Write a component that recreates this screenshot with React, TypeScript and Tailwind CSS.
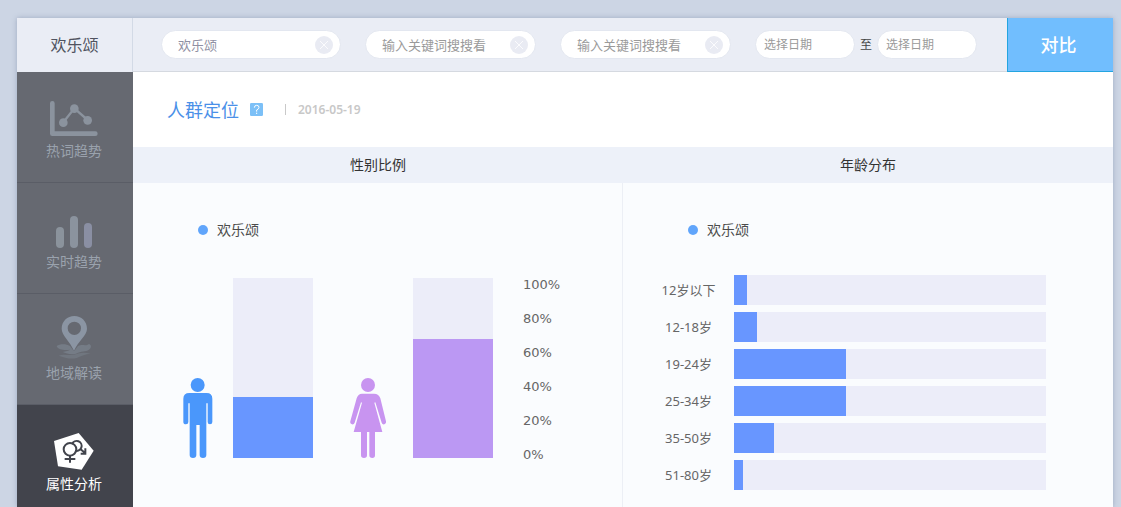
import type { ReactNode } from "react";

const navItems: { label: string; icon: ReactNode; active?: boolean }[] = [
  {
    label: "热词趋势",
    icon: (
      <svg width="48" height="36" viewBox="0 0 144 108" fill="none" stroke="#8b939e" aria-hidden="true">
        <path d="M7 7V98H136" strokeWidth="14" strokeLinecap="round" strokeLinejoin="round" />
        <path d="M40 64L73 22L113 57" strokeWidth="7" />
        <g fill="#8b939e" stroke="none">
          <circle cx="40" cy="65" r="13" />
          <circle cx="73" cy="23" r="13" />
          <circle cx="113" cy="58" r="13" />
        </g>
      </svg>
    ),
  },
  {
    label: "实时趋势",
    icon: (
      <svg width="36" height="32" viewBox="0 0 108 96" aria-hidden="true">
        <rect x="0" y="33" width="24" height="63" rx="12" fill="#8b939c" />
        <rect x="42" y="0" width="24" height="96" rx="12" fill="#8b939e" />
        <rect x="84" y="21" width="24" height="75" rx="12" fill="#8a8fa3" />
      </svg>
    ),
  },
  {
    label: "地域解读",
    icon: (
      <svg width="36" height="43" viewBox="0 0 108 129" aria-hidden="true">
        <path
          d="M2 90C12 83 30 83 42 90L54 106L66 90C78 84 86 90 95 86C104 82 108 92 102 98C94 108 80 104 66 110C52 118 34 114 20 108C30 106 38 104 42 101C28 104 6 102 2 90Z"
          fill="#757c86"
        />
        <path
          d="M8 119C24 113 38 120 54 116C72 110 84 108 104 113C88 114 76 120 62 126C44 131 26 125 8 119Z"
          fill="#70767f"
        />
        <path
          fillRule="evenodd"
          d="M55 0C34 0 17 16 17 38C17 58 42 76 54 104C66 76 93 58 93 38C93 16 76 0 55 0ZM55 17A20 20 0 1 1 55 57A20 20 0 1 1 55 17Z"
          fill="#8b95a3"
        />
      </svg>
    ),
  },
  {
    label: "属性分析",
    active: true,
    icon: (
      <svg width="40" height="37" viewBox="0 0 120 111" fill="none" aria-hidden="true">
        <path d="M0 24L74 0L119 53L83 110L12 100Z" fill="#fff" />
        <g stroke="#42444c" strokeWidth="6">
          <path d="M54 33A15 15 0 1 1 63 53" />
          <path d="M79 48L94 61M80 62H94V46" />
          <circle cx="48" cy="49" r="19" />
          <path d="M48 68V89M32 78H64" />
        </g>
      </svg>
    ),
  },
];

const axis = ["100%", "80%", "60%", "40%", "20%", "0%"];

const ages = [
  { label: "12岁以下", value: 4.2 },
  { label: "12-18岁", value: 7.4 },
  { label: "19-24岁", value: 36 },
  { label: "25-34岁", value: 36 },
  { label: "35-50岁", value: 12.8 },
  { label: "51-80岁", value: 2.9 },
];

function KeywordField({ label, value, wide }: { label: string; value?: string; wide?: boolean }) {
  return (
    <div
      className={`${wide ? "w-[180px]" : "w-[171px]"} flex h-[29px] items-center rounded-full border border-[#e3e7f0] bg-white pr-[7px] pl-4`}
    >
      <input
        type="text"
        aria-label={label}
        defaultValue={value}
        placeholder="输入关键词搜搜看"
        className="h-full min-w-0 flex-1 bg-transparent text-[13px] text-[#8f90a3] outline-none placeholder:text-[#9a9a9a]"
      />
      <button type="button" aria-label="清除" className="h-[18px] w-[18px] shrink-0">
        <svg width="18" height="18" viewBox="0 0 18 18" aria-hidden="true">
          <circle cx="9" cy="9" r="9" fill="#e9ebf3" />
          <path d="M5 5L13 13M13 5L5 13" stroke="#fff" strokeWidth="0.8" />
        </svg>
      </button>
    </div>
  );
}

function DateField({ label }: { label: string }) {
  return (
    <input
      type="text"
      aria-label={label}
      placeholder="选择日期"
      className="h-[29px] w-[100px] rounded-full border border-[#e3e7f0] bg-white px-2 text-xs outline-none placeholder:text-[#9a9a9a]"
    />
  );
}

function Legend() {
  return (
    <div className="flex h-6 items-center gap-[9px] pl-[65px] text-sm text-[#4c4c4c]">
      <span className="h-[10px] w-[10px] rounded-full bg-[#60a5fb]" />
      欢乐颂
    </div>
  );
}

function Man() {
  return (
    <svg width="30" height="80" viewBox="0 0 90 240" fill="#4a97fb" role="img" aria-label="男">
      <circle cx="44" cy="21" r="21" />
      <path d="M19 45H71Q88 45 88 62V132Q88 139 81 139Q74 139 74 132V76H70V231Q70 240 60 240Q50 240 50 231V141H40V231Q40 240 30 240Q20 240 20 231V76H16V132Q16 139 9 139Q1 139 1 132V62Q1 45 19 45Z" />
    </svg>
  );
}

function Woman() {
  return (
    <svg width="36" height="80" viewBox="0 0 108 240" fill="#c894f0" role="img" aria-label="女">
      <circle cx="54" cy="21" r="21" />
      <path d="M36 47H72Q87 47 91 61L108 130Q109 137 103 139Q97 140 95 134L76 73L73 74L97 162H75V232Q75 240 67 240Q58 240 58 232V162H51V232Q51 240 42 240Q33 240 33 232V162H11L36 74L33 73L14 134Q12 140 6 139Q-1 137 1 130L20 61Q24 47 36 47Z" />
    </svg>
  );
}

export default function App() {
  return (
    <div className="flex min-h-screen flex-col bg-[#ccd5e4] pt-[18px] pr-2 pl-[17px] font-['Noto_Sans','Noto_Sans_CJK_SC',sans-serif]">
      <div className="flex flex-1 flex-col bg-[#fafcfe] shadow-[0_0_5px_rgba(90,105,140,0.4)]">
        <header className="flex h-[54px] shrink-0 bg-[#eaedf5]">
          <div className="flex w-[116px] shrink-0 items-center justify-center border-r border-[#d3dae6] text-base text-[#50535f]">
            欢乐颂
          </div>
          <form className="flex min-w-0 flex-1 items-center gap-6 border-b border-[#d5d9e0] pl-7">
            <KeywordField label="关键词一" value="欢乐颂" wide />
            <KeywordField label="关键词二" />
            <KeywordField label="关键词三" />
            <div className="flex items-center gap-[5px] text-xs text-[#444]">
              <DateField label="开始日期" />
              <span>至</span>
              <DateField label="结束日期" />
            </div>
          </form>
          <button
            type="button"
            className="w-[106px] shrink-0 border-0 border-b border-l border-solid border-[#24a5e0] bg-[#71befe] pr-1 text-lg font-medium text-white"
          >
            对比
          </button>
        </header>

        <div className="flex flex-1">
          <nav className="flex w-[116px] shrink-0 flex-col bg-[#666971]">
            {navItems.map((item) => (
              <a
                key={item.label}
                href="#"
                className={`flex flex-col items-center pt-[21px] pr-0.5 text-sm leading-7 ${
                  item.active
                    ? "flex-1 bg-[#42444c] text-white"
                    : "border-b border-[#5a5d66] pb-[17px] text-[#9aa2ad]"
                }`}
              >
                <span className="flex h-11 items-end">{item.icon}</span>
                {item.label}
              </a>
            ))}
          </nav>

          <main className="flex min-w-0 flex-1 flex-col">
            <div className="flex h-[75px] shrink-0 items-center bg-white pl-[34px]">
              <h1 className="text-lg text-[#4a90e8]">人群定位</h1>
              <button type="button" aria-label="帮助" className="ml-[11px] h-[13px] w-[13px]">
                <svg width="13" height="13" viewBox="0 0 39 39" aria-hidden="true">
                  <rect width="39" height="39" rx="4" fill="#7cc0f7" />
                  <path
                    d="M13 14Q13 7 20 7Q27 7 27 13Q27 18 20 21V26M20 29V33"
                    fill="none"
                    stroke="#fff"
                    strokeWidth="3"
                  />
                </svg>
              </button>
              <span className="ml-[22px] h-[11px] w-px bg-[#c9c9c9]" />
              <time className="ml-3 text-xs font-semibold text-[#c8c8c8]">2016-05-19</time>
            </div>

            <div className="grid flex-1 grid-cols-2">
              <section className="flex flex-col">
                <h2 className="bg-[#edf1f9] text-center text-sm leading-9 text-[#333]">性别比例</h2>
                <div className="flex-1 border-r border-[#eceff5] pt-[35px]">
                  <Legend />
                  <div className="mt-[26px] flex items-end pl-[50px]">
                    <div className="flex items-end gap-5 pb-[14px]">
                      <Man />
                      <div className="flex h-[180px] w-20 items-end bg-[#ecedf9]">
                        <div className="w-full bg-[#6896ff]" style={{ height: "34%" }} />
                      </div>
                    </div>
                    <div className="ml-[37px] flex items-end gap-[27px] pb-[14px]">
                      <Woman />
                      <div className="flex h-[180px] w-20 items-end bg-[#ecedf9]">
                        <div className="w-full bg-[#bb98f3]" style={{ height: "66%" }} />
                      </div>
                    </div>
                    <ul className="ml-[30px] font-['DejaVu_Sans',sans-serif] text-[13px] leading-[34px] text-[#666]">
                      {axis.map((tick) => (
                        <li key={tick}>{tick}</li>
                      ))}
                    </ul>
                  </div>
                </div>
              </section>

              <section className="flex flex-col">
                <h2 className="bg-[#edf1f9] text-center text-sm leading-9 text-[#333]">年龄分布</h2>
                <div className="flex-1 pt-[35px]">
                  <Legend />
                  <ul className="mt-[33px] flex flex-col gap-[7px] pr-[67px] pl-5">
                    {ages.map((row) => (
                      <li key={row.label} className="flex h-[30px]">
                        <span className="w-[91px] shrink-0 text-center text-[13px] leading-[30px] text-[#666]">
                          {row.label}
                        </span>
                        <span className="flex-1 bg-[#ecedf9]">
                          <span className="block h-full bg-[#6896ff]" style={{ width: `${row.value}%` }} />
                        </span>
                      </li>
                    ))}
                  </ul>
                </div>
              </section>
            </div>
          </main>
        </div>
      </div>
    </div>
  );
}
